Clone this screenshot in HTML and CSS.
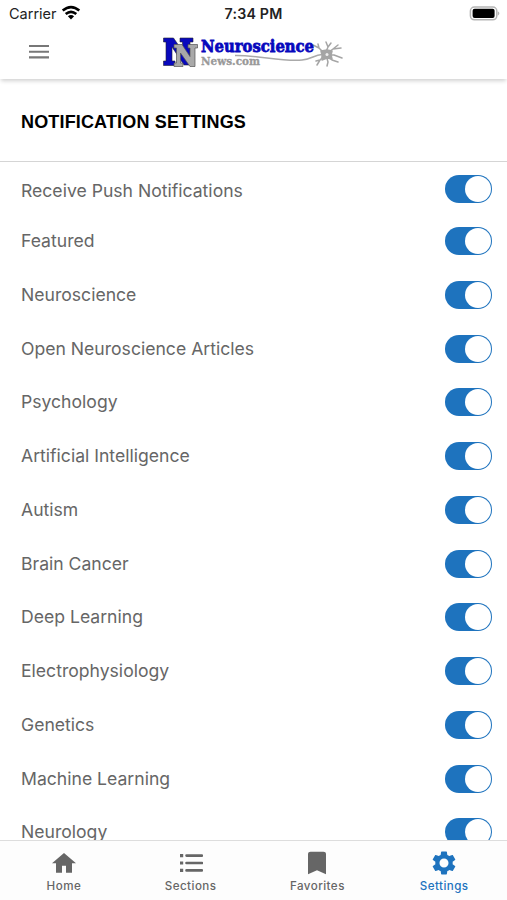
FILE: index.html
```html
<!DOCTYPE html>
<html lang="en">
<head>
<meta charset="utf-8">
<title>Notification Settings</title>
<link rel="stylesheet" href="styles.css">
</head>
<body>
<div class="app">
  <div class="status">
    <div class="carrier"><span>Carrier</span>
      <svg width="20" height="16" viewBox="0 0 20 16" fill="none" stroke="#000" stroke-width="2.6"><path d="M1.7 5.6Q10-1.3 18.3 5.6M4.7 9Q10 4.6 15.3 9"/><path d="M6.9 11.3Q10 8.8 13.1 11.3L10 14.5Z" fill="#000" stroke="none"/></svg>
    </div>
    <div class="time">7:34 PM</div>
    <svg class="battery" width="32" height="16" viewBox="0 0 32 16"><rect x="1.4" y="1" width="26.4" height="12.8" rx="4" fill="#fff" stroke="#b5b5b5" stroke-width="1.5"/><rect x="3.6" y="2.8" width="22" height="9.2" rx="2" fill="#000"/><path d="M28.8 5.3Q32 7.5 28.8 9.8Z" fill="#b5b5b5"/></svg>
  </div>
  <header class="header">
    <svg class="menu" width="22" height="16" viewBox="0 0 22 16"><path d="M1 2h20M1 7.7h20M1 13.4h20" stroke="#777" stroke-width="2.1"/></svg>
    <svg class="logo" width="184" height="36" viewBox="0 0 184 36">
      <path d="M2.500 3h10l9 13V7h-2.500V3H32v4h-3v23h-6L11 12v14h3v4.500H2.500V26H5V7H2.500Z" fill="#0808bd" stroke="#223" stroke-width=".6"/>
      <path d="M13 9.500h8l8 12V13h-2V9.500h9.500V13H34v18.500h-5L19.500 18v10H22v3.500h-9V28h2.500V13H13Z" fill="#a9a9a9" stroke="#555" stroke-width=".7"/>
      <path d="M74 20.500C96 20 122 27 141 25C151 24 153 20 161 19.500" fill="none" stroke="#aaa" stroke-width="1.500"/>
      <g fill="none" stroke="#a5a5a5" stroke-width="1.500" stroke-linecap="round" stroke-linejoin="round">
        <path d="M164 19L158 13L152 10M158 13L157 9M164 19L167 12L165 7M167 12L170 8M165 19L172 14L180 13M172 14L177 10M165 20L173 20L181 23M165 20L171 25L177 27M165 20L167 27L166 31M164 20L159 25L156 30M159 25L155 26"/>
        <path d="M160 16L166 15L171 16L170 20L171 24L166 23L161 25L161 20Z" fill="#a5a5a5"/>
      </g>
      <circle cx="166" cy="19.500" r="1.500" fill="#eee"/>
      <text class="brand" x="40" y="16.800" textLength="113" lengthAdjust="spacingAndGlyphs">Neuroscience</text>
      <text class="domain" x="40" y="29.500" textLength="59" lengthAdjust="spacingAndGlyphs">News.com</text>
    </svg>
  </header>
  <h1>NOTIFICATION SETTINGS</h1>
  <main class="list">
    <div class="row first"><span>Receive Push Notifications</span><i class="toggle"></i></div>
    <div class="row"><span>Featured</span><i class="toggle"></i></div>
    <div class="row"><span>Neuroscience</span><i class="toggle"></i></div>
    <div class="row"><span>Open Neuroscience Articles</span><i class="toggle"></i></div>
    <div class="row"><span>Psychology</span><i class="toggle"></i></div>
    <div class="row"><span>Artificial Intelligence</span><i class="toggle"></i></div>
    <div class="row"><span>Autism</span><i class="toggle"></i></div>
    <div class="row"><span>Brain Cancer</span><i class="toggle"></i></div>
    <div class="row"><span>Deep Learning</span><i class="toggle"></i></div>
    <div class="row"><span>Electrophysiology</span><i class="toggle"></i></div>
    <div class="row"><span>Genetics</span><i class="toggle"></i></div>
    <div class="row"><span>Machine Learning</span><i class="toggle"></i></div>
    <div class="row"><span>Neurology</span><i class="toggle"></i></div>
  </main>
  <nav class="tabs">
    <div class="tab"><svg viewBox="0 0 24 24"><path d="M10 21.800v-7h4v7h6v-9.500H24L12 2 0 12.300h4v9.500Z"/></svg><span>Home</span></div>
    <div class="tab"><svg viewBox="0 0 24 24"><path d="M7.500 4.600h15.500M7.500 12h15.500M7.500 19.400h15.500" stroke="currentColor" stroke-width="2.600" stroke-linecap="round"/><path d="M1 3h3.200v3.200H1ZM1 10.400h3.200v3.200H1ZM1 17.800h3.200V21H1Z"/></svg><span>Sections</span></div>
    <div class="tab"><svg viewBox="0 0 24 24"><path d="M5.500.7h13q2.500 0 2.500 2v20.600L12 19.200 3 23.300V2.700q0-2 2.500-2Z"/></svg><span>Favorites</span></div>
    <div class="tab active"><svg viewBox="0 0 24 24"><path transform="translate(12 12) scale(1.16) translate(-12 -12)" d="M19.430 12.980c.04-.32.07-.64.07-.98s-.03-.66-.07-.98l2.110-1.650c.19-.15.24-.42.12-.64l-2-3.460c-.12-.22-.39-.3-.61-.22l-2.490 1c-.52-.4-1.080-.73-1.690-.98l-.38-2.650C14.460 2.180 14.250 2 14 2h-4c-.25 0-.46.18-.49.42l-.38 2.650c-.61.25-1.170.59-1.690.98l-2.490-1c-.23-.09-.49 0-.61.22l-2 3.460c-.13.22-.07.49.12.64l2.110 1.650c-.04.32-.07.65-.07.98s.03.66.07.98l-2.110 1.650c-.19.15-.24.42-.12.64l2 3.460c.12.22.39.3.61.22l2.490-1c.52.4 1.080.73 1.690.98l.38 2.650c.03.24.24.42.49.42h4c.25 0 .46-.18.49-.42l.38-2.650c.61-.25 1.170-.59 1.690-.98l2.490 1c.23.09.49 0 .61-.22l2-3.460c.12-.22.07-.49-.12-.64l-2.110-1.650zM12 15.900c-2.150 0-3.900-1.750-3.900-3.900s1.750-3.900 3.900-3.900 3.900 1.750 3.900 3.900-1.750 3.900-3.900 3.900z"/></svg><span>Settings</span></div>
  </nav>
</div>
</body>
</html>
```
FILE: styles.css
```css
* { box-sizing: border-box; }
body { margin: 0; background: #fff; font-family: Inter, "Liberation Sans", sans-serif; }
.app { height: 900px; display: flex; flex-direction: column; overflow: hidden; }
.status { flex: none; height: 27px; display: grid; grid-template-columns: 1fr auto 1fr; align-items: center; padding: 0 6px 0 9px; color: #222; }
.carrier { display: flex; align-items: center; gap: 5px; font-size: 14.5px; }
.carrier svg { margin: -2px 0 0 -1px; }
.time { margin-right: 3px; font-size: 14.2px; font-weight: 600; letter-spacing: .2px; }
.battery { justify-self: end; }
.header { flex: none; height: 52px; display: flex; align-items: flex-start; padding: 17px 0 0 28px; box-shadow: 0 3px 4px -1px rgba(0,0,0,.18); }
.logo { margin: -9px 0 0 111px; }
.brand { font: bold 17px "DejaVu Serif", serif; fill: #0808bd; stroke: #0808bd; stroke-width: .8px; }
.domain { font: bold 10.5px "DejaVu Serif", serif; fill: #999; stroke: #999; stroke-width: .3px; }
h1 { flex: none; height: 83px; margin: 0; padding: 2px 21px 0; border-bottom: 1px solid #d5d5d5; font: bold 18px/82px "Liberation Sans", Arial, sans-serif; letter-spacing: .16px; color: #000; }
.list { flex: 1; min-height: 0; overflow: hidden; }
.row { height: 53.75px; padding: 0 15px 0 21px; display: flex; align-items: center; justify-content: space-between; font-size: 17.6px; color: #666; }
.row span { padding-bottom: 1px; }
.row.first { height: 52.2px; padding-top: 2px; }
.row.first span { padding: 2px 0 0; }
.toggle { width: 47px; height: 28px; border-radius: 14px; background: #1e73be; padding: 1px; display: flex; justify-content: flex-end; }
.toggle::after { content: ""; width: 26px; height: 26px; border-radius: 50%; background: #fff; }
.tabs { flex: none; height: 60px; border-top: 1px solid #ddd; background: #fdfdfd; display: grid; grid-template-columns: repeat(4, 1fr); }
.tab { display: flex; flex-direction: column; align-items: center; padding: 10px 0 0 1px; color: #666; font-size: 11.6px; font-weight: 500; line-height: 16px; letter-spacing: .45px; }
.tab svg { width: 24px; height: 24px; margin-bottom: 3px; fill: currentColor; }
.tab.active { color: #1e73be; }
```
